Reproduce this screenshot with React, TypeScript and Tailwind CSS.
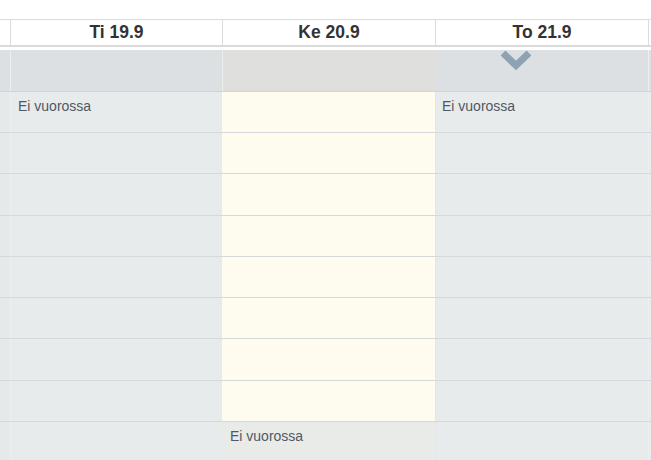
import React from "react";

function Chevron() {
  return (
    <svg width="34" height="22" viewBox="0 0 34 22" className="block">
      <polyline
        points="4,3 17,15.5 30,3"
        fill="none"
        stroke="#8fa2b3"
        strokeWidth="7"
        strokeLinecap="butt"
        strokeLinejoin="miter"
      />
    </svg>
  );
}

const rowH = ["h-[41px]", "h-[41px]", "h-[42px]", "h-[41px]", "h-[41px]", "h-[41px]", "h-[42px]", "h-[41px]", "h-[41px]"];

export default function App() {
  const font = { fontFamily: '"Liberation Sans", Arial, sans-serif' };
  return (
    <div className="w-[651px] h-[460px] overflow-hidden bg-white" style={font}>
      <div className="h-[19px]" />
      {/* header */}
      <div className="flex h-[28px] border-t border-[#dcdcdc] border-b-2 border-b-[#dadada]">
        <div className="w-[10px] shrink-0" />
        {[
          { w: "w-[212px]", t: "Ti 19.9" },
          { w: "w-[213px]", t: "Ke 20.9" },
          { w: "w-[213px]", t: "To 21.9" },
        ].map((c) => (
          <div
            key={c.t}
            className={`${c.w} shrink-0 border-l border-[#dcdcdc] flex items-center justify-center text-[17.5px] font-bold text-[#333]`}
          >
            {c.t}
          </div>
        ))}
        <div className="flex-1 border-l border-[#dcdcdc]" />
      </div>
      <div className="h-[3px]" />
      {/* gray row */}
      <div className="flex h-[42px] border-b border-[#cfd3d6]">
        <div className="w-[10px] shrink-0 bg-[#dce0e3]" />
        <div className="w-[212px] shrink-0 bg-[#dce0e3] border-l border-[#eceef0]" />
        <div className="w-[213px] shrink-0 bg-[#dfe0de] border-l border-[#eceeec]" />
        <div className="w-[213px] shrink-0 bg-[#dce0e3] border-l border-[#dcdfe1] pl-[63px]">
          <Chevron />
        </div>
        <div className="flex-1 bg-[#dce0e3] border-l border-[#eceef0]" />
      </div>
      {/* body rows */}
      {rowH.map((h, i) => {
        const last = i === rowH.length - 1;
        return (
          <div key={i} className={`flex ${h} border-b border-[#d6d9db]`}>
            <div className="w-[10px] shrink-0 bg-[#e6e9ea]" />
            <div className="w-[212px] shrink-0 bg-[#e8ebec] border-l border-[#eceeef] pl-[7px] pt-[4px] text-[14px] text-[#4f5963]">
              {i === 0 ? "Ei vuorossa" : ""}
            </div>
            <div
              className={`w-[213px] shrink-0 border-l pl-[7px] pt-[4px] text-[14px] text-[#4f5963] ${
                last ? "bg-[#e9ebe8] border-[#e9ebe8]" : "bg-[#fefbef] border-[#fefbef]"
              }`}
            >
              {last ? "Ei vuorossa" : ""}
            </div>
            <div className="w-[213px] shrink-0 bg-[#e8ebec] border-l border-[#e4e7e8] pl-[6px] pt-[4px] text-[14px] text-[#4f5963]">
              {i === 0 ? "Ei vuorossa" : ""}
            </div>
            <div className="flex-1 bg-[#e8ebec] border-l border-[#eceeef]" />
          </div>
        );
      })}
    </div>
  );
}
